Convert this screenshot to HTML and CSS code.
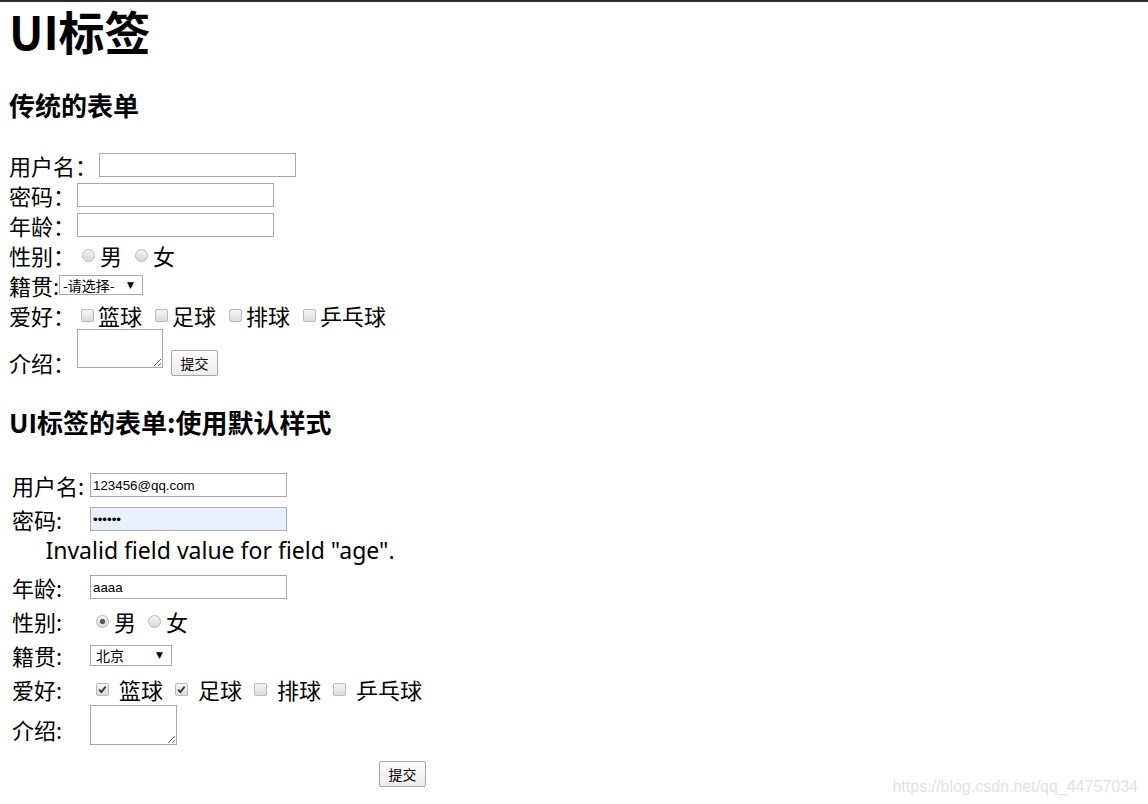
FILE: index.html
```html
<!DOCTYPE html>
<html lang="zh-CN">
<head>
<meta charset="utf-8">
<title>UI标签</title>
<link rel="stylesheet" href="styles.css">
</head>
<body>
<h1 class="title">UI标签</h1>
<h3 class="sub sub-first">传统的表单</h3>
<form class="plain">
  <div class="row"><span class="lbl w-user">用户名：</span><input class="txt" type="text"></div>
  <div class="row"><span class="lbl w-pw">密码：</span><input class="txt" type="password"></div>
  <div class="row"><span class="lbl w-pw">年龄：</span><input class="txt" type="text"></div>
  <div class="row"><span class="lbl w-sex">性别：</span><input class="radio" type="radio" name="s1"><span class="opt">男</span><input class="radio" type="radio" name="s1"><span class="opt">女</span></div>
  <div class="row"><span class="lbl w-jg">籍贯:</span><span class="selwrap sel-a"><select class="sel"><option>-请选择-</option></select><span class="arrow">▼</span></span></div>
  <div class="row"><span class="lbl w-hobby">爱好：</span><input class="cb" type="checkbox"><span class="opt">篮球</span><input class="cb" type="checkbox"><span class="opt">足球</span><input class="cb" type="checkbox"><span class="opt">排球</span><input class="cb" type="checkbox"><span class="opt">乒乓球</span></div>
  <div class="row row-area"><span class="lbl w-pw area-lbl">介绍：</span><textarea class="area"></textarea><button class="btn btn-first" type="button">提交</button></div>
</form>

<h3 class="sub sub-second">UI标签的表单:使用默认样式</h3>
<form class="ui">
<table class="ui-table">
  <tr><td class="tl"><div class="fc">用户名:</div></td><td><div class="fc fv"><input class="txt" type="text" value="123456@qq.com"></div></td></tr>
  <tr><td class="tl"><div class="fc">密码:</div></td><td><div class="fc fv"><input class="txt autofill" type="password" value="123456"></div></td></tr>
  <tr><td colspan="2"><div class="fc err">Invalid field value for field "age".</div></td></tr>
  <tr><td class="tl"><div class="fc">年龄:</div></td><td><div class="fc fv"><input class="txt" type="text" value="aaaa"></div></td></tr>
  <tr><td class="tl"><div class="fc">性别:</div></td><td><div class="fc"><input class="radio r2" type="radio" name="s2" checked><span class="opt opt-r2">男</span><input class="radio r2" type="radio" name="s2"><span class="opt opt-r2">女</span></div></td></tr>
  <tr><td class="tl"><div class="fc">籍贯:</div></td><td><div class="fc fv"><span class="selwrap sel-b"><select class="sel"><option>北京</option></select><span class="arrow">▼</span></span></div></td></tr>
  <tr><td class="tl"><div class="fc">爱好:</div></td><td><div class="fc"><span class="cbwrap"><input class="cb cb2" type="checkbox" checked><svg class="tick" viewBox="0 0 13 13" width="13" height="13"><path d="M3.2 6.6 L5.4 9 L9.6 3.6" fill="none" stroke="#333" stroke-width="1.8"/></svg></span><span class="opt opt2">篮球</span><span class="cbwrap"><input class="cb cb2" type="checkbox" checked><svg class="tick" viewBox="0 0 13 13" width="13" height="13"><path d="M3.2 6.6 L5.4 9 L9.6 3.6" fill="none" stroke="#333" stroke-width="1.8"/></svg></span><span class="opt opt2">足球</span><span class="cbwrap"><input class="cb cb2" type="checkbox"></span><span class="opt opt2">排球</span><span class="cbwrap"><input class="cb cb2" type="checkbox"></span><span class="opt opt2 last">乒乓球</span></div></td></tr>
  <tr><td class="tl"><div class="fc fc-area">介绍:</div></td><td><div class="fc fv fc-area fc-top"><textarea class="area area2"></textarea></div></td></tr>
  <tr><td colspan="2"><div class="fc fc-submit"><button class="btn" type="button">提交</button></div></td></tr>
</table>
</form>

<div class="watermark">https://blog.csdn.net/qq_44757034</div>
</body>
</html>
```

FILE: styles.css
```css
html {
  border-top: 2px solid #2e2e2e;
  background: #fff;
}
body {
  margin: 0 8px;
  font-family: "Noto Sans CJK SC", "Noto Sans", sans-serif;
  font-size: 22px;
  color: #000;
}
.title {
  margin: 0 0 32px 1px;
  font-size: 46px;
  line-height: 56px;
  font-weight: 700;
}
.sub {
  margin: 0 0 0 1px;
  font-size: 26px;
  line-height: 30px;
  font-weight: 700;
}
.sub-first { margin-bottom: 30px; }
.sub-second { margin-top: 29px; margin-bottom: 30px; }

.plain .row {
  display: flex;
  align-items: center;
  height: 30px;
  line-height: 30px;
  white-space: nowrap;
}
.lbl { flex: none; padding-left: 1px; box-sizing: border-box; }
.w-user { width: 91px; }
.w-pw { width: 69px; }
.w-sex { width: 74px; }
.w-jg { width: 51px; }
.w-hobby { width: 73px; }

.txt {
  box-sizing: border-box;
  width: 197px;
  height: 24px;
  margin: 0;
  padding: 1px 2px;
  border: 1px solid #a9a9a9;
  font-family: "Liberation Sans", Arial, sans-serif;
  font-size: 13.33px;
  color: #000;
  background: #fff;
}
.autofill { background: #e8f0fe; }

.radio {
  appearance: none;
  -webkit-appearance: none;
  flex: none;
  width: 13px;
  height: 13px;
  margin: 0 5px 0 0;
  border: 1px solid #b9b9b9;
  border-radius: 50%;
  background: linear-gradient(#f4f4f4, #d9d9d9);
  box-sizing: border-box;
}
.radio:checked {
  background: radial-gradient(circle, #5a5a5a 0 2.4px, transparent 3px), linear-gradient(#f4f4f4, #d9d9d9);
}
.cb {
  appearance: none;
  -webkit-appearance: none;
  flex: none;
  width: 13px;
  height: 13px;
  margin: 0 4px 0 0;
  border: 1px solid #b9b9b9;
  border-radius: 2px;
  background: linear-gradient(#f6f6f6, #dcdcdc);
  box-sizing: border-box;
}
.opt { margin-right: 13px; }

.selwrap {
  position: relative;
  display: inline-block;
  line-height: 0;
}
.sel {
  appearance: none;
  -webkit-appearance: none;
  box-sizing: border-box;
  margin: 0;
  border: 1px solid #a9a9a9;
  border-radius: 0;
  background: #fff;
  color: #000;
  font-family: "Noto Sans CJK SC", sans-serif;
  font-size: 14px;
  padding: 0 0 0 3px;
}
.sel-a .sel { width: 84px; height: 20px; line-height: 18px; }
.sel-b .sel { width: 82px; height: 21px; line-height: 19px; padding-left: 5px; }
.arrow {
  position: absolute;
  top: 50%;
  transform: translateY(-50%);
  right: 9px;
  font-size: 9px;
  line-height: 9px;
  color: #000;
  pointer-events: none;
  font-family: "DejaVu Sans", sans-serif;
}

.area {
  box-sizing: border-box;
  width: 86px;
  height: 39px;
  margin: 0;
  border: 1px solid #a9a9a9;
  padding: 2px;
  font-size: 13px;
  flex: none;
}
.plain .row-area {
  height: 48px;
  align-items: flex-start;
}
.row-area .area { margin-top: -1px; }
.area-lbl { margin-top: 17px; line-height: 30px; }
.btn {
  box-sizing: border-box;
  width: 47px;
  height: 26px;
  margin: 0;
  padding: 0;
  border: 1px solid #a6a6a6;
  border-radius: 2px;
  background: linear-gradient(#fefefe, #ececec);
  font-family: "Noto Sans CJK SC", sans-serif;
  font-size: 14px;
  color: #000;
  line-height: 22px;
}
.btn-first { margin: 20px 0 0 8px; }

/* UI form table */
.ui-table {
  width: 423px;
  border-collapse: separate;
  border-spacing: 2px;
  margin: 0;
}
.ui-table td {
  padding: 1px;
  vertical-align: top;
  white-space: nowrap;
}
.ui-table .tl { width: 75px; }
.fc {
  display: flex;
  align-items: center;
  height: 30px;
  line-height: 30px;
  padding-left: 1px;
}
.fc.fv { padding-left: 0; }
.err {
  justify-content: center;
  font-family: "Noto Sans", "Noto Sans CJK SC", sans-serif;
  font-size: 23px;
  padding-bottom: 6px;
  box-sizing: border-box;
}
.r2 { margin-left: 5px; margin-right: 5px; }
.opt-r2 { margin-right: 7px; }
.cbwrap {
  position: relative;
  display: inline-block;
  flex: none;
  width: 13px;
  height: 13px;
  margin-left: 5px;
  margin-right: 10px;
  line-height: 0;
}
.cbwrap .cb2 { margin: 0; }
.tick {
  position: absolute;
  left: 0;
  top: 0;
  pointer-events: none;
}
.opt2 { margin-right: 7px; }
.opt2.last { margin-right: 0; }
.fc-area { height: 42px; line-height: 30px; }
.fc-top { align-items: flex-start; }
.area2 {
  width: 87px;
  height: 40px;
  margin-top: -3px;
}
.fc-submit {
  justify-content: flex-end;
  align-items: flex-start;
  height: 33px;
}
.fc-submit .btn { margin: 7px 2px 0 0; }

.watermark {
  position: absolute;
  right: 10px;
  bottom: 8px;
  font-family: "Liberation Sans", Arial, sans-serif;
  font-size: 16px;
  color: #e3e3e3;
}
```
